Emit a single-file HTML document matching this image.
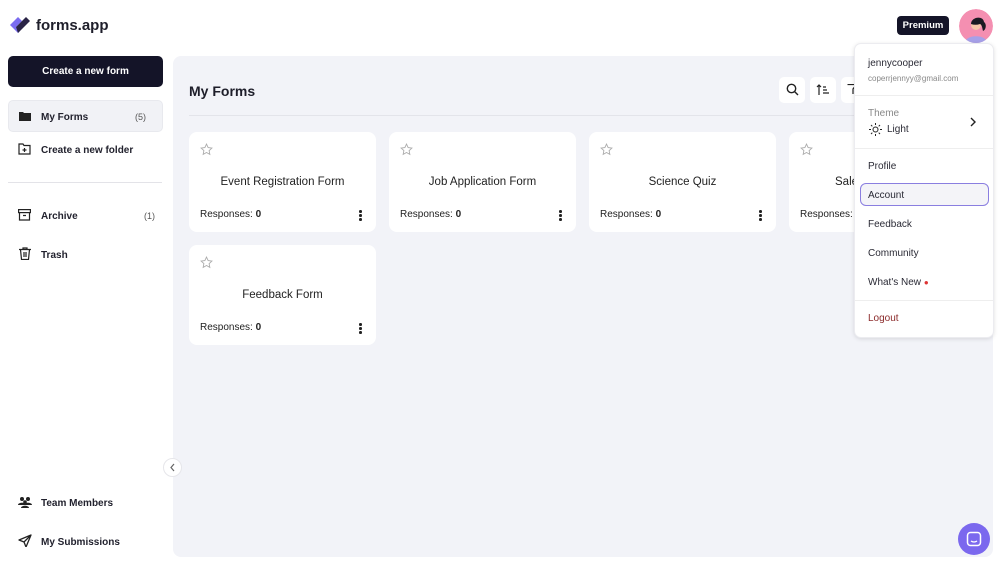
<!DOCTYPE html>
<html><head><style>
*{box-sizing:border-box;margin:0;padding:0}
body{width:1000px;height:565px;background:#fff;font-family:"Liberation Sans",sans-serif;color:#1d1d2b;position:relative;overflow:hidden}
.abs{position:absolute}
.side{font-size:10px;font-weight:bold;color:#22222e}
.card{position:absolute;background:#fff;border-radius:8px;width:187px;height:100px}
.card .t{position:absolute;top:44px;left:0;right:0;text-align:center;font-size:11.5px;color:#222}
.card .r{position:absolute;top:77px;left:11px;font-size:10px;color:#222}
.card .d{position:absolute;top:78px;right:14px;width:3px}
.card .d i{display:block;width:2.5px;height:2.5px;background:#222;border-radius:50%;margin-bottom:1.5px}
.card svg.s{position:absolute;left:11px;top:11px}
.menu div.i{position:absolute;left:13px;font-size:10px;color:#2a2a35}
</style></head><body>
<svg class="abs" style="left:8px;top:15px" width="24" height="20" viewBox="0 0 24 20"><path d="M2 10 L10 2 L14 6 L8 12 L12 16 L10 18 Z" fill="#7b6cf0"/><path d="M10 18 L22 6 L18 2 L8 12 Z" fill="#2a2446"/></svg>
<div class="abs" style="left:36px;top:17px;font-size:15px;font-weight:bold;color:#1e1e2a">forms.app</div>
<div class="abs" style="left:8px;top:56px;width:155px;height:31px;background:#141428;border-radius:5px;color:#fff;font-size:10px;font-weight:bold;text-align:center;line-height:31px">Create a new form</div>
<div class="abs" style="left:8px;top:100px;width:155px;height:32px;background:#f1f2f6;border-radius:5px;border:1px solid #e8e9ee"></div>
<svg class="abs" style="left:19px;top:111px" width="12" height="10"><path d="M0 1h4l1 1h7v8H0z" fill="#222"/></svg>
<div class="abs side" style="left:41px;top:112px">My Forms</div>
<div class="abs" style="left:135px;top:112px;font-size:9px;color:#555">(5)</div>
<svg class="abs" style="left:18px;top:143px" width="13" height="12"><path d="M1 1h4l1 1.5h6V11H1z" fill="none" stroke="#222" stroke-width="1.2"/><path d="M6.5 5v4M4.5 7h4" stroke="#222" stroke-width="1.2"/></svg>
<div class="abs side" style="left:41px;top:145px">Create a new folder</div>
<div class="abs" style="left:8px;top:182px;width:154px;height:1px;background:#e3e3e8"></div>
<svg class="abs" style="left:18px;top:209px" width="13" height="12"><rect x="0.6" y="0.6" width="11.8" height="3" fill="none" stroke="#222" stroke-width="1.2"/><path d="M1.5 4v7h10V4M5 6.5h3" fill="none" stroke="#222" stroke-width="1.2"/></svg>
<div class="abs side" style="left:41px;top:211px">Archive</div>
<div class="abs" style="left:144px;top:211px;font-size:9px;color:#555">(1)</div>
<svg class="abs" style="left:19px;top:247px" width="12" height="13"><path d="M0 2.5h12M4 2.5V1h4v1.5M1.5 2.5l1 10h7l1-10M5 5v5M7 5v5" fill="none" stroke="#222" stroke-width="1.2"/></svg>
<div class="abs side" style="left:41px;top:250px">Trash</div>
<svg class="abs" style="left:18px;top:496px" width="14" height="12"><circle cx="4" cy="3" r="2" fill="#222"/><circle cx="10" cy="3" r="2" fill="#222"/><circle cx="7" cy="6" r="1.8" fill="#222"/><path d="M0 9c0-3 8-3 8 0zM6 9c0-3 8-3 8 0zM3 12c0-3 8-3 8 0z" fill="#222"/></svg>
<div class="abs side" style="left:41px;top:498px">Team Members</div>
<svg class="abs" style="left:18px;top:534px" width="14" height="13"><path d="M13 1L1 6l5 2 2 5zM6 8l7-7" fill="none" stroke="#222" stroke-width="1.3" stroke-linejoin="round"/></svg>
<div class="abs side" style="left:41px;top:537px">My Submissions</div>
<div class="abs" style="left:173px;top:56px;width:820px;height:501px;background:#f2f3f8;border-radius:8px"></div>
<div class="abs" style="left:163px;top:458px;width:19px;height:19px;border-radius:50%;background:#fff;border:1px solid #e6e6ea"></div>
<svg class="abs" style="left:169px;top:463px" width="8" height="9"><path d="M5 1L2 4.5 5 8" fill="none" stroke="#666" stroke-width="1.2"/></svg>
<div class="abs" style="left:189px;top:83px;font-size:14px;font-weight:bold;color:#1e1e2a">My Forms</div>
<div class="abs" style="left:189px;top:115px;width:670px;height:1px;background:#e3e4ea"></div>
<div class="abs" style="left:779px;top:77px;width:26px;height:26px;background:#fff;border-radius:5px"></div>
<svg class="abs" style="left:786px;top:83px" width="13" height="13"><circle cx="5.5" cy="5.5" r="4.2" fill="none" stroke="#222" stroke-width="1.4"/><path d="M8.5 8.5l3.5 3.5" stroke="#222" stroke-width="1.4"/></svg>
<div class="abs" style="left:810px;top:77px;width:26px;height:26px;background:#fff;border-radius:5px"></div>
<svg class="abs" style="left:816px;top:83px" width="14" height="13"><path d="M3 12V2M1 4l2-2 2 2M7 4h3M7 7h4M7 10h6" fill="none" stroke="#222" stroke-width="1.2"/></svg>
<div class="abs" style="left:841px;top:77px;width:26px;height:26px;background:#fff;border-radius:5px"></div>
<svg class="abs" style="left:847px;top:84px" width="10" height="11"><path d="M0.5 0.5h9L6 5v5" fill="none" stroke="#222" stroke-width="1.2"/></svg>
<div class="card" style="left:189px;top:132px"><svg class="s" width="13" height="13" viewBox="0 0 24 24"><path d="M12 2l3 6.5 7 .8-5.2 4.8 1.4 7L12 17.6 5.8 21l1.4-7L2 9.3l7-.8z" fill="none" stroke="#aaa" stroke-width="1.6"/></svg><div class="t">Event Registration Form</div><div class="r">Responses: <b>0</b></div><div class="d"><i></i><i></i><i></i></div></div>
<div class="card" style="left:389px;top:132px"><svg class="s" width="13" height="13" viewBox="0 0 24 24"><path d="M12 2l3 6.5 7 .8-5.2 4.8 1.4 7L12 17.6 5.8 21l1.4-7L2 9.3l7-.8z" fill="none" stroke="#aaa" stroke-width="1.6"/></svg><div class="t">Job Application Form</div><div class="r">Responses: <b>0</b></div><div class="d"><i></i><i></i><i></i></div></div>
<div class="card" style="left:589px;top:132px"><svg class="s" width="13" height="13" viewBox="0 0 24 24"><path d="M12 2l3 6.5 7 .8-5.2 4.8 1.4 7L12 17.6 5.8 21l1.4-7L2 9.3l7-.8z" fill="none" stroke="#aaa" stroke-width="1.6"/></svg><div class="t">Science Quiz</div><div class="r">Responses: <b>0</b></div><div class="d"><i></i><i></i><i></i></div></div>
<div class="card" style="left:789px;top:132px"><svg class="s" width="13" height="13" viewBox="0 0 24 24"><path d="M12 2l3 6.5 7 .8-5.2 4.8 1.4 7L12 17.6 5.8 21l1.4-7L2 9.3l7-.8z" fill="none" stroke="#aaa" stroke-width="1.6"/></svg><div class="t" style="left:46px;text-align:left">Sales Form</div><div class="r">Responses: <b>0</b></div></div>
<div class="card" style="left:189px;top:245px"><svg class="s" width="13" height="13" viewBox="0 0 24 24"><path d="M12 2l3 6.5 7 .8-5.2 4.8 1.4 7L12 17.6 5.8 21l1.4-7L2 9.3l7-.8z" fill="none" stroke="#aaa" stroke-width="1.6"/></svg><div class="t">Feedback Form</div><div class="r">Responses: <b>0</b></div><div class="d"><i></i><i></i><i></i></div></div>
<div class="abs" style="left:897px;top:16px;width:52px;height:19px;background:#141428;border-radius:4px;color:#fff;font-size:9.5px;font-weight:bold;text-align:center;line-height:19px">Premium</div>
<svg class="abs" style="left:959px;top:9px" width="34" height="34" viewBox="0 0 34 34"><defs><clipPath id="c"><circle cx="17" cy="17" r="17"/></clipPath></defs><g clip-path="url(#c)"><circle cx="17" cy="17" r="17" fill="#f48fb1"/><path d="M6 34c0-9 22-9 22 0z" fill="#a6a0e8"/><circle cx="17" cy="16" r="5" fill="#f7c7a9"/><path d="M12 15c0-7 12-9 13-2 3 2 2 8-1 9-1-4-1-6-3-7-3 1-6 1-9 0z" fill="#1a1a22"/></g></svg>
<div class="abs menu" style="left:854px;top:43px;width:140px;height:295px;background:#fff;border-radius:7px;box-shadow:0 1px 4px rgba(0,0,0,.12);border:1px solid #ececf0">
<div class="i" style="top:14px;font-size:10px">jennycooper</div>
<div class="i" style="top:30px;font-size:8px;color:#888">coperrjennyy@gmail.com</div>
<div class="abs" style="left:0;right:0;top:51px;height:1px;background:#eee"></div>
<div class="i" style="top:64px;color:#888">Theme</div>
<svg class="abs" style="left:14px;top:79px" width="13" height="13"><circle cx="6.5" cy="6.5" r="2.5" fill="none" stroke="#222"/><path d="M6.5 0v2M6.5 11v2M0 6.5h2M11 6.5h2M2 2l1.3 1.3M9.7 9.7L11 11M2 11l1.3-1.3M9.7 3.3L11 2" stroke="#222"/></svg>
<div class="i" style="left:32px;top:80px">Light</div>
<svg class="abs" style="left:114px;top:73px" width="8" height="10"><path d="M2 1l4 4-4 4" fill="none" stroke="#222" stroke-width="1.4"/></svg>
<div class="abs" style="left:0;right:0;top:104px;height:1px;background:#eee"></div>
<div class="i" style="top:117px">Profile</div>
<div class="abs" style="left:5px;top:139px;width:129px;height:23px;border:1.5px solid #8a7ee0;border-radius:6px;background:#f4f4f8"></div>
<div class="i" style="top:146px">Account</div>
<div class="i" style="top:175px">Feedback</div>
<div class="i" style="top:204px">Community</div>
<div class="i" style="top:233px">What's New <span style="color:#d33;font-size:8px">●</span></div>
<div class="abs" style="left:0;right:0;top:256px;height:1px;background:#eee"></div>
<div class="i" style="top:269px;color:#8b2a2a">Logout</div>
</div>
<div class="abs" style="left:958px;top:523px;width:32px;height:32px;border-radius:50%;background:#7b68ee"></div>
<svg class="abs" style="left:966px;top:531px" width="16" height="16"><rect x="1.5" y="1.5" width="13" height="13" rx="3" fill="none" stroke="#fff" stroke-width="1.5"/><path d="M5 10q3 2 6 0" fill="none" stroke="#fff" stroke-width="1.3"/></svg>
</body></html>
